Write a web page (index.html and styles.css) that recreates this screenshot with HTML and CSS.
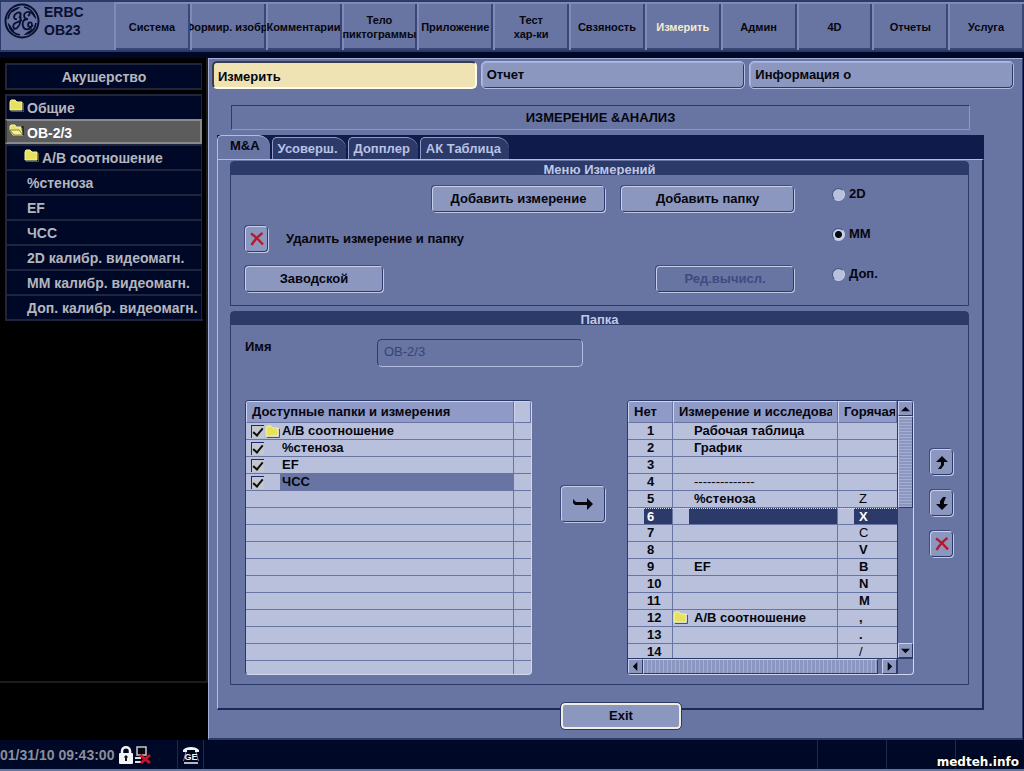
FILE: index.html
```html
<!DOCTYPE html>
<html lang="ru">
<head>
<meta charset="utf-8">
<title>Измерение и анализ</title>
<link rel="stylesheet" href="styles.css">
</head>
<body>
<svg class="defs" aria-hidden="true">
  <defs>
    <symbol id="folder" viewBox="0 0 15 13">
      <path d="M1 3 L2 1 H6 L8 3 H13 V11 H1 Z" fill="#e6e25c" stroke="#f6f3a8"/>
      <path d="M14.5 4 V12.5 H2" fill="none" stroke="#5c5a20"/>
    </symbol>
    <symbol id="folder-open" viewBox="0 0 15 13">
      <path d="M1 2 L2 1 H6 L7 3 H12 V6 L14 11 H4 L1 6 Z" fill="#e6e06c" stroke="#f6f3a8"/>
      <path d="M1 6 H10 L14 11 H5 Z" fill="#f4f0a0" stroke="#8a8630"/>
      <path d="M12.5 3 H14.5 V11" fill="none" stroke="#2c2c14" stroke-width="2"/>
    </symbol>
    <symbol id="cross" viewBox="0 0 14 14">
      <path d="M1 1.500 C5 4 9 8 13 12.500 M12.500 1 C8 4 4 9 1.500 13" fill="none" stroke="#b8182a" stroke-width="2.400"/>
    </symbol>
  </defs>
</svg>

<header class="topbar">
  <div class="brand">
    <svg class="logo" viewBox="0 0 36 36" aria-label="GE">
      <circle cx="18" cy="18" r="16.500" fill="none" stroke="#0a1030" stroke-width="2"/>
      <path d="M4 16 C5 9 9 6 14 5 C12 7 9 7 8 9 M20 4 C25 5 30 9 31 14 C29 12 29 10 26 9 M32 20 C31 26 27 30 22 31 C24 29 27 29 28 26 M16 32 C10 31 6 27 5 22 C7 24 7 27 10 28" fill="none" stroke="#0a1030" stroke-width="1.600"/>
      <path d="M13 16 C9 17 9 12 13 10 C17 8 18 12 15 15 M16 9 C17 15 17 22 13 25 C10 27 8 24 10 21 C12 19 15 19 18 17 M24 13 C27 11 26 8 23 9 C19 10 19 16 24 16 C19 16 18 20 19 23 C20 28 27 27 28 22 C28 18 24 19 24 22 C24 24 27 25 29 22" fill="none" stroke="#0a1030" stroke-width="1.800"/>
    </svg>
    <div class="brand-text">ERBC<br>OB23</div>
  </div>
  <nav class="modes">
    <button type="button">Система</button>
    <button type="button">Формир. изобр.</button>
    <button type="button">Комментарии</button>
    <button type="button">Тело<br>пиктограммы</button>
    <button type="button">Приложение</button>
    <button type="button">Тест<br>хар-ки</button>
    <button type="button">Свзяность</button>
    <button type="button" class="current">Измерить</button>
    <button type="button">Админ</button>
    <button type="button">4D</button>
    <button type="button">Отчеты</button>
    <button type="button">Услуга</button>
  </nav>
</header>

<div class="workspace">
  <aside class="sidebar">
    <div class="side-inner">
      <button type="button" class="side-title">Акушерство</button>
      <nav class="side-list">
        <button type="button"><svg class="folder"><use href="#folder"/></svg>Общие</button>
        <button type="button" class="selected"><svg class="folder"><use href="#folder-open"/></svg>ОВ-2/3</button>
        <button type="button" class="nested"><svg class="folder"><use href="#folder"/></svg>A/B соотношение</button>
        <button type="button" class="plain">%стеноза</button>
        <button type="button" class="plain">EF</button>
        <button type="button" class="plain">ЧСС</button>
        <button type="button" class="plain">2D калибр. видеомагн.</button>
        <button type="button" class="plain">MM калибр. видеомагн.</button>
        <button type="button" class="plain">Доп. калибр. видеомагн.</button>
      </nav>
    </div>
  </aside>

  <main class="panel">
    <nav class="sections">
      <button type="button" class="section active">Измерить</button>
      <button type="button" class="section">Отчет</button>
      <button type="button" class="section">Информация о</button>
    </nav>
    <h1 class="title">ИЗМЕРЕНИЕ &amp;АНАЛИЗ</h1>

    <div class="tabs">
      <button type="button" class="tab active">M&amp;A</button>
      <button type="button" class="tab">Усоверш.</button>
      <button type="button" class="tab">Допплер</button>
      <button type="button" class="tab">АК Таблица</button>
    </div>

    <div class="sheet">
      <section class="group">
        <h2>Меню Измерений</h2>
        <div class="menu-body">
          <div class="menu-rows">
            <div class="menu-row end">
              <button type="button" class="btn wide">Добавить измерение</button>
              <button type="button" class="btn wide">Добавить папку</button>
            </div>
            <div class="menu-row">
              <button type="button" class="btn square" id="del"><svg class="cross"><use href="#cross"/></svg></button>
              <label for="del">Удалить измерение и папку</label>
            </div>
            <div class="menu-row between">
              <button type="button" class="btn medium">Заводской</button>
              <button type="button" class="btn medium" disabled>Ред.вычисл.</button>
            </div>
          </div>
          <div class="radios">
            <label><input type="radio" name="mode">2D</label>
            <label><input type="radio" name="mode" checked>MM</label>
            <label><input type="radio" name="mode">Доп.</label>
          </div>
        </div>
      </section>

      <section class="group">
        <h2>Папка</h2>
        <div class="folder-body">
          <div class="name-row">
            <label for="name">Имя</label>
            <input id="name" type="text" value="ОВ-2/3" disabled>
          </div>
          <div class="lists">
            <div class="list">
              <table class="grid available">
                <colgroup><col><col class="c-end"></colgroup>
                <thead><tr><th>Доступные папки и измерения</th><th class="knob"></th></tr></thead>
                <tbody>
                  <tr><td><label><input type="checkbox" checked><svg class="folder"><use href="#folder"/></svg><span>A/B соотношение</span></label></td><td></td></tr>
                  <tr><td><label><input type="checkbox" checked><i class="nofolder"></i><span>%стеноза</span></label></td><td></td></tr>
                  <tr><td><label><input type="checkbox" checked><i class="nofolder"></i><span>EF</span></label></td><td></td></tr>
                  <tr class="picked"><td><label><input type="checkbox" checked><i class="nofolder"></i><span>ЧСС</span></label></td><td></td></tr>
                  <tr><td></td><td></td></tr>
                  <tr><td></td><td></td></tr>
                  <tr><td></td><td></td></tr>
                  <tr><td></td><td></td></tr>
                  <tr><td></td><td></td></tr>
                  <tr><td></td><td></td></tr>
                  <tr><td></td><td></td></tr>
                  <tr><td></td><td></td></tr>
                  <tr><td></td><td></td></tr>
                  <tr><td></td><td></td></tr>
                  <tr><td></td><td></td></tr>
                </tbody>
              </table>
            </div>

            <button type="button" class="btn move" aria-label="Переместить">
              <svg class="arrow-right" viewBox="0 0 20 12"><path d="M0 1 L3 4 H14 V0 L20 6 L14 12 V7 H2 L0 5 Z" fill="#05060e"/></svg>
            </button>

            <div class="list scrolled">
              <div class="viewport">
                <table class="grid assigned">
                  <colgroup><col class="c-num"><col><col class="c-key"></colgroup>
                  <thead><tr><th>Нет</th><th><div class="clip">Измерение и исследование</div></th><th><div class="clip">Горячая</div></th></tr></thead>
                  <tbody>
                    <tr><td>1</td><td>Рабочая таблица</td><td></td></tr>
                    <tr><td>2</td><td>График</td><td></td></tr>
                    <tr><td>3</td><td></td><td></td></tr>
                    <tr><td>4</td><td class="thin">--------------</td><td></td></tr>
                    <tr><td>5</td><td>%стеноза</td><td class="thin">Z</td></tr>
                    <tr class="focused"><td>6</td><td></td><td>X</td></tr>
                    <tr><td>7</td><td></td><td class="thin">C</td></tr>
                    <tr><td>8</td><td></td><td>V</td></tr>
                    <tr><td>9</td><td>EF</td><td>B</td></tr>
                    <tr><td>10</td><td></td><td>N</td></tr>
                    <tr><td>11</td><td></td><td>M</td></tr>
                    <tr><td>12</td><td class="with-icon"><svg class="folder"><use href="#folder"/></svg>A/B соотношение</td><td>,</td></tr>
                    <tr><td>13</td><td></td><td>.</td></tr>
                    <tr><td>14</td><td></td><td class="thin">/</td></tr>
                  </tbody>
                </table>
              </div>
              <div class="vbar">
                <span class="step"><svg viewBox="0 0 10 10"><path d="M0 8 L5 3 L10 8 Z"/></svg></span>
                <span class="thumb"></span>
                <span class="step last"><svg viewBox="0 0 10 10"><path d="M0 3 L5 8 L10 3 Z"/></svg></span>
              </div>
              <div class="hbar">
                <span class="step"><svg viewBox="0 0 10 10"><path d="M7 0 L2 5 L7 10 Z"/></svg></span>
                <span class="thumb"></span>
                <span class="step"><svg viewBox="0 0 10 10"><path d="M3 0 L8 5 L3 10 Z"/></svg></span>
              </div>
              <div class="corner"></div>
            </div>

            <div class="order">
              <button type="button" class="btn square" aria-label="Вверх"><svg class="arrow" viewBox="0 0 12 13"><path d="M6 0 L12 6 H8 V9 L5 13 H2 L5 9 V6 H0 Z" fill="#05060e"/></svg></button>
              <button type="button" class="btn square" aria-label="Вниз"><svg class="arrow" viewBox="0 0 12 13"><path d="M6 13 L12 7 H8 V5 L10 0 H7 L4 4 V7 H0 Z" fill="#05060e"/></svg></button>
              <button type="button" class="btn square" aria-label="Удалить"><svg class="cross"><use href="#cross"/></svg></button>
            </div>
          </div>
        </div>
      </section>
    </div>
    <button type="button" class="exit">Exit</button>
  </main>
</div>

<footer class="status">
  <div class="clock">
    <time>01/31/10 09:43:00</time>
    <svg class="lock" viewBox="0 0 14 18"><path d="M3 8 V5 C3 0 11 0 11 5 V8" fill="none" stroke="#f4f4f4" stroke-width="2.500"/><rect y="7" width="14" height="11" rx="1" fill="#f4f4f4"/><path d="M7 9 L9 11 L8 12 V15 H6 V12 L5 11 Z" fill="#10142c"/></svg>
    <svg class="net" viewBox="0 0 17 18"><rect x="2" y="1" width="9" height="8" fill="#05060e" stroke="#c8c8c8" stroke-width="1.500"/><path d="M0 12 H6 M0 16 H8" stroke="#e0e0e0" stroke-width="2"/><path d="M5 9 L15 17 M15 9 L6 17" stroke="#c41424" stroke-width="3"/></svg>
  </div>
  <div class="cell phone">
    <svg viewBox="0 0 18 18" aria-label="GE"><path d="M1 6 V4 C4 0 14 0 17 4 V6 H13 V4 H5 V6 Z" fill="#f4f4f4"/><path d="M4 6 L1.500 15 M14 6 L16.500 15" stroke="#8088a8"/><path d="M2 17 H16" stroke="#f4f4f4" stroke-width="1.500"/><text x="9" y="14" text-anchor="middle" class="phone-text">GE</text></svg>
  </div>
  <div class="cell grow"></div>
  <div class="cell slot"></div>
  <div class="cell slot"></div>
  <div class="cell slot site">medteh.info</div>
</footer>
</body>
</html>
```

FILE: styles.css
```css
* { box-sizing: border-box; }

:root {
  --panel: #6874a2;
  --light: #a4aed6;
  --pale: #b8c0dc;
  --face: #8c97c0;
  --dark: #2c3a6a;
  --navy: #0f1b4b;
  --night: #000828;
  --ink: #05060e;
}

body {
  margin: 0;
  min-height: 100vh;
  display: flex;
  flex-direction: column;
  background: var(--night);
  color: var(--ink);
  font: bold 13px/16px "Liberation Sans", Arial, sans-serif;
}

button, input {
  font: inherit;
  color: inherit;
  margin: 0;
  padding: 0;
  border: 0;
  background: none;
}

.defs { position: absolute; width: 0; height: 0; }
.folder { width: 15px; height: 13px; flex: none; }
.cross { width: 14px; height: 14px; display: block; }

/* top bar */
.topbar {
  display: flex;
  height: 52px;
  margin: 0 0 6px;
  border: solid var(--dark);
  border-width: 2px 0 2px 1px;
  background: var(--panel);
}
.brand { flex: none; width: 113px; display: flex; gap: 4px; padding: 1px 3px; }
.logo { width: 36px; height: 36px; }
.brand-text { font-size: 14px; line-height: 18px; color: #0a1030; }
.modes { flex: 1; display: grid; grid-template-columns: repeat(12, minmax(0, 1fr)); }
.modes button {
  display: flex;
  align-items: center;
  justify-content: center;
  overflow: hidden;
  white-space: nowrap;
  font-size: 11px;
  line-height: 14px;
  padding-top: 2px;
  box-shadow: inset 2px 2px #7e8ab8, inset -2px -2px #3a4676;
}
.modes .current { color: #f4ecd0; }

.workspace { flex: 1; display: flex; }

/* sidebar */
.sidebar { flex: none; width: 208px; background: #000; }
.side-inner { height: 625px; padding: 5px 3px 0 5px; border-right: 2px solid #1c1c1e; border-bottom: 2px solid #1c1c1e; }
.sidebar button {
  display: flex;
  width: 197px;
  color: #b4b6be;
  font-size: 14px;
  background: var(--night);
  border: solid #20243c;
  border-width: 2px 1px 0 2px;
  white-space: nowrap;
}
.sidebar .side-title { height: 27px; margin-bottom: 4px; align-items: center; justify-content: center; border-bottom-width: 2px; }
.side-list { border-bottom: 2px solid #20243c; }
.side-list button { height: 25px; gap: 3px; padding: 4px 0 0 2px; }
.side-list button .folder { margin-top: -1px; }
.side-list .nested { padding-left: 17px; }
.side-list .plain { padding-left: 20px; }
.sidebar .selected { color: #fff; background: #5c5c5c; border: 2px solid #8a8a8a; border-left-color: #3a3a3a; }

/* main panel */
.panel {
  flex: 1;
  min-width: 0;
  display: flex;
  flex-direction: column;
  padding: 2px 8px 9px 3px;
  margin-right: 1px;
  background: var(--panel);
  border: solid var(--light);
  border-width: 1px 1px 2px 1px;
  border-right-color: var(--dark);
  border-bottom-color: var(--dark);
}
.sections { display: grid; grid-template-columns: repeat(3, 1fr); gap: 4px; }
.section {
  height: 28px;
  padding: 0 5px;
  text-align: left;
  background: var(--face);
  border: 1px solid #b4bce0;
  border-radius: 5px;
  box-shadow: inset -1px -1px var(--dark), inset 1px 1px #a4aed6;
}
.section.active { padding-top: 3px; background: #efe3b4; border: 2px solid; border-color: #3a3d4e #fffbe8 #fffbe8 #3a3d4e; padding-left: 4px; box-shadow: none; }

.title {
  margin: 16px 44px 5px 19px;
  padding: 4px 0 3px;
  font-size: 13px;
  line-height: 16px;
  text-align: center;
  border: 1px solid;
  border-color: var(--dark) #8e99c4 #8e99c4 var(--dark);
}

.tabs {
  display: flex;
  align-items: flex-end;
  gap: 2px;
  height: 24px;
  margin: 0 30px 0 5px;
  background: var(--navy);
}
.tab {
  height: 22px;
  padding: 0 8px 0 5px;
  color: #b8c2e4;
  background: var(--dark);
  border: solid #8e9ac8;
  border-width: 1px 0 0 1px;
  border-radius: 5px 12px 0 0;
}
.tab.active { height: 24px; padding: 0 10px 4px 12px; color: var(--ink); background: var(--panel); border-color: #b4bce0; }

.sheet {
  flex: 1;
  display: flex;
  flex-direction: column;
  gap: 5px;
  margin: 0 30px 0 5px;
  padding: 1px 13px 23px 12px;
  border: solid;
  border-width: 1px 2px 2px 1px;
  border-color: #b4bce0 #1c2858 #1c2858 #b4bce0;
}
.group { border: 1px solid var(--dark); border-radius: 4px 4px 0 0; }
.group h2 {
  height: 13px;
  margin: 0;
  overflow: hidden;
  font-size: 13px;
  line-height: 15px;
  text-align: center;
  color: #c0c8e6;
  background: var(--dark);
}

.btn {
  display: flex;
  align-items: center;
  justify-content: center;
  height: 26px;
  background: var(--face);
  border: 1px solid;
  border-color: #c8d0ee var(--dark) var(--dark) #c8d0ee;
  border-radius: 4px;
  box-shadow: 1px 1px #c0c8e6, -1px -1px #3e4b7c;
}
.btn.wide { width: 173px; }
.btn.medium { width: 138px; }
.btn.square { width: 23px; }
.btn:disabled { color: #3e4b80; background: var(--panel); }

.menu-body { display: flex; gap: 38px; padding: 11px 14px 13px; }
.menu-rows { flex: 1; display: flex; flex-direction: column; gap: 14px; }
.menu-row { display: flex; align-items: center; gap: 16px; }
.menu-row label { padding-left: 2px; }
.end { justify-content: flex-end; }
.between { justify-content: space-between; }
.radios { flex: none; width: 122px; display: flex; flex-direction: column; gap: 24px; }
.radios label { display: flex; align-items: center; gap: 4px; }
.radios input {
  appearance: none;
  width: 13px;
  height: 13px;
  border: 1px solid;
  border-color: #46527f #c8d0ee #c8d0ee #46527f;
  border-radius: 50%;
  background: #b8c0dc;
}
.radios input:checked { background: radial-gradient(circle, #05060e 3px, #c8d0e8 4px); }

.folder-body { padding: 14px 14px 9px; }
.name-row { display: flex; gap: 16px; }
.name-row label { width: 116px; }
.name-row input {
  width: 206px;
  height: 28px;
  padding: 0 6px 4px;
  font-weight: normal;
  color: #36437a;
  border: 1px solid;
  border-color: var(--dark) #b4bce0 #b4bce0 var(--dark);
  border-radius: 5px;
}

.lists {
  display: grid;
  grid-template-columns: minmax(0, 1fr) 63px minmax(0, 1fr) 24px;
  gap: 16px;
  margin-top: 33px;
}
.list {
  height: 275px;
  overflow: hidden;
  background: var(--pale);
  border: 1px solid;
  border-color: var(--dark) #d0d6ee #d0d6ee var(--dark);
  border-radius: 4px;
}
.grid { width: 100%; table-layout: fixed; border-collapse: separate; border-spacing: 0; }
.grid th {
  height: 22px;
  padding: 0 5px;
  overflow: hidden;
  white-space: nowrap;
  text-align: left;
  background: #8f9ac6;
  border: 1px solid;
  border-color: #ccd4f0 var(--panel) var(--panel) #ccd4f0;
}
.grid td {
  height: 17px;
  padding: 0;
  overflow: hidden;
  white-space: nowrap;
  line-height: 16px;
  border: solid var(--panel);
  border-width: 0 1px 1px 0;
}
.grid td:last-child { border-right: 0; }
.grid th .clip { overflow: hidden; }
.grid th:last-child { padding-right: 1px; }
.grid .thin { font-weight: normal; }
.c-end { width: 17px; }
.c-num { width: 45px; }
.c-key { width: 59px; }
.available .knob { background: var(--pale); }
.available label { display: flex; align-items: center; height: 16px; padding-left: 5px; }
.available label span { flex: 1; padding-left: 2px; }
.nofolder { width: 15px; flex: none; }
.available input {
  appearance: none;
  flex: none;
  display: flex;
  justify-content: center;
  width: 13px;
  height: 13px;
  margin-right: 1px;
  background: #c4c8cc;
  border: solid #1c2870;
  border-width: 1px 0 0 1px;
}
.available input:checked::after {
  content: "";
  width: 4px;
  height: 8px;
  border: solid #101010;
  border-width: 0 2px 2px 0;
  transform: rotate(40deg);
}
.picked span { background: var(--panel); }

.btn.move { width: 44px; height: 36px; margin: 86px 0 0 13px; }
.arrow-right { width: 20px; height: 12px; }
.arrow { width: 12px; height: 13px; }

.scrolled { display: grid; grid-template: minmax(0, 1fr) 16px / minmax(0, 1fr) 16px; background: var(--panel); }
.viewport { overflow: hidden; background: var(--pale); }
.assigned td:first-child { padding-left: 19px; }
.assigned td:nth-child(2) { padding-left: 21px; }
.assigned td:nth-child(3) { padding-left: 21px; }
.assigned td.with-icon.with-icon { padding-left: 0; }
.with-icon .folder { margin-right: 6px; vertical-align: -2px; }
.assigned .focused td {
  color: #fff;
  background: linear-gradient(90deg, var(--pale) 16px, var(--dark) 16px);
  border-top: 1px dotted #d8def4;
  line-height: 15px;
}

.vbar, .hbar { display: flex; background: var(--panel); }
.vbar { flex-direction: column; border-left: 1px solid var(--dark); }
.hbar { border-top: 1px solid var(--dark); }
.step, .thumb { border: 1px solid; border-color: #c8d0ee var(--dark) var(--dark) #c8d0ee; background: var(--face); }
.step { flex: none; width: 15px; height: 15px; display: flex; align-items: center; justify-content: center; }
.step svg { width: 9px; height: 9px; fill: var(--ink); }
.vbar .thumb { height: 92px; background: repeating-linear-gradient(var(--face) 0 2px, #a4aed2 2px 3px); }
.vbar .last { margin-top: auto; }
.hbar .thumb { flex: 1; margin-right: 4px; background: repeating-linear-gradient(90deg, var(--face) 0 3px, #a4aed2 3px 4px); }
.corner { border: solid var(--dark); border-width: 1px 0 0 1px; }

.order { display: flex; flex-direction: column; gap: 15px; padding-top: 49px; }

.exit {
  align-self: center;
  width: 120px;
  height: 26px;
  margin: -7px 0 0 16px;
  background: var(--face);
  border: 2px solid #efeee0;
  border-radius: 4px;
  outline: 1px solid var(--dark);
}

/* status bar */
.status { display: flex; height: 32px; border-bottom: 3px solid var(--panel); }
.clock { flex: none; width: 177px; display: flex; align-items: center; gap: 2px; color: #8c8e98; font-size: 14px; }
.clock time { margin-right: 3px; white-space: nowrap; }
.lock { width: 14px; height: 18px; }
.net { width: 17px; height: 18px; }
.cell { border-left: 1px solid #20284c; }
.phone { width: 26px; display: flex; align-items: center; justify-content: center; }
.phone svg { width: 18px; height: 18px; }
.phone-text { font-size: 9px; fill: #f4f4f4; }
.grow { flex: 1; }
.slot { flex: none; width: 69px; }
.site {
  display: flex;
  align-items: flex-end;
  justify-content: flex-end;
  padding-right: 5px;
  color: #fff;
  font: bold 12px/14px "DejaVu Sans", Verdana, sans-serif;
  text-shadow: 1px 1px #000, -1px -1px #000;
}
```
